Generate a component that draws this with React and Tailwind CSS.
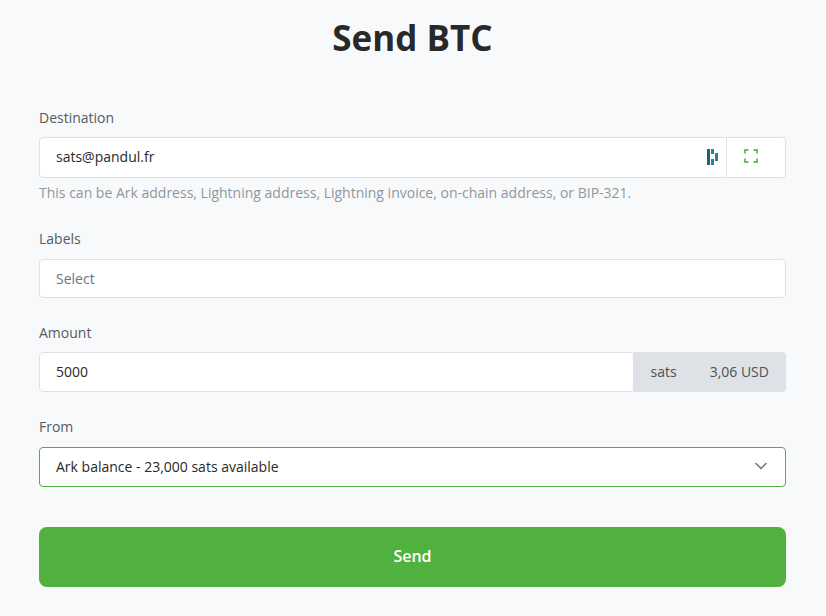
import { useState } from 'react';

function BoltzIcon() {
  return (
    <svg width="11" height="16" viewBox="0 0 11 16" className="mb-[1px] block">
      <rect x="0" y="0" width="3" height="16" fill="#17667a" />
      <rect x="4" y="0" width="3" height="5" fill="#2f7f92" />
      <rect x="4" y="10" width="3" height="6" fill="#2f7f92" />
      <rect x="8" y="4" width="3" height="8" fill="#2f7f92" />
    </svg>
  );
}

function ScanIcon() {
  return (
    <svg width="14" height="14" viewBox="0 0 14 14" fill="none" stroke="#51b13e" strokeWidth="2" opacity="0.8" className="mb-[3px] block">
      <path d="M1 4.5V1h3.5" />
      <path d="M9.5 1H13v3.5" />
      <path d="M13 9.5V13H9.5" />
      <path d="M4.5 13H1V9.5" />
    </svg>
  );
}

export default function App() {
  const [destination, setDestination] = useState("sats@pandul.fr");
  const [amount, setAmount] = useState("5000");

  return (
    <div className="w-[826px] h-[616px] overflow-hidden bg-[#f8f9fa] pl-[39px] pr-[40px] font-['Open_Sans',sans-serif] text-[14px] text-[#292929]">
      <h1 className="h-[77px] pt-[13px] text-center text-[35px] leading-[50px] font-bold">Send BTC</h1>

      <div className="pt-[29px]">
        <label htmlFor="destination" className="block h-[31px] pt-[2px] leading-[20px] text-[#545b61]">Destination</label>
        <div className="flex h-[41px]">
          <div className="flex flex-1 items-center rounded-l-[4px] border border-[#dee2e6] bg-white pl-[16px] pr-[8px]">
            <input
              id="destination"
              value={destination}
              onChange={(e) => setDestination(e.target.value)}
              className="min-w-0 flex-1 bg-transparent pb-[2px] leading-[20px] outline-none"
            />
            <BoltzIcon />
          </div>
          <button className="flex w-[59px] items-center justify-center rounded-r-[4px] border border-l-0 border-[#dee2e6] bg-white pr-[10px]">
            <ScanIcon />
          </button>
        </div>
        <p className="mt-[5px] leading-[20px] text-[#8f979e]">
          This can be Ark address, Lightning address, Lightning invoice, on-chain address, or BIP-321.
        </p>
      </div>

      <div className="mt-[26px]">
        <label htmlFor="labels" className="block h-[30px] leading-[20px] text-[#545b61]">Labels</label>
        <input
          id="labels"
          placeholder="Select"
          className="block h-[39px] w-full rounded-[4px] border border-[#dee2e6] bg-white px-[16px] outline-none placeholder:text-[#6c757d]"
        />
      </div>

      <div className="mt-[24px]">
        <label htmlFor="amount" className="block h-[30px] pt-[1px] leading-[20px] text-[#545b61]">Amount</label>
        <div className="flex h-[40px]">
          <input
            id="amount"
            value={amount}
            onChange={(e) => setAmount(e.target.value)}
            className="min-w-0 flex-1 rounded-l-[4px] border border-[#dee2e6] bg-white px-[16px] pb-[2px] outline-none"
          />
          <div className="flex w-[152px] items-center gap-[33px] rounded-r-[4px] bg-[#dee2e6] pb-[2px] pl-[16.5px] text-[#4a5259]">
            <span>sats</span>
            <span>3,06 USD</span>
          </div>
        </div>
      </div>

      <div className="mt-[25px]">
        <label htmlFor="from" className="block h-[30px] leading-[20px] text-[#545b61]">From</label>
        <button id="from" className="flex h-[40px] w-full items-center justify-between rounded-[4px] border border-[#51b13e] bg-white pb-[2px] pl-[16px] pr-[19px]">
          <span>Ark balance - 23,000 sats available</span>
          <svg width="10" height="6" viewBox="0 0 10 6" fill="none" stroke="#6c757d" strokeWidth="1.5" strokeLinecap="round" strokeLinejoin="round" className="block overflow-visible">
            <path d="M0 0.5l5 5 5-5" />
          </svg>
        </button>
      </div>

      <button className="mt-[40px] block h-[60px] w-full rounded-[8px] bg-[#51b13e] pb-[2px] text-[16px] font-semibold text-white">Send</button>
    </div>
  );
}
